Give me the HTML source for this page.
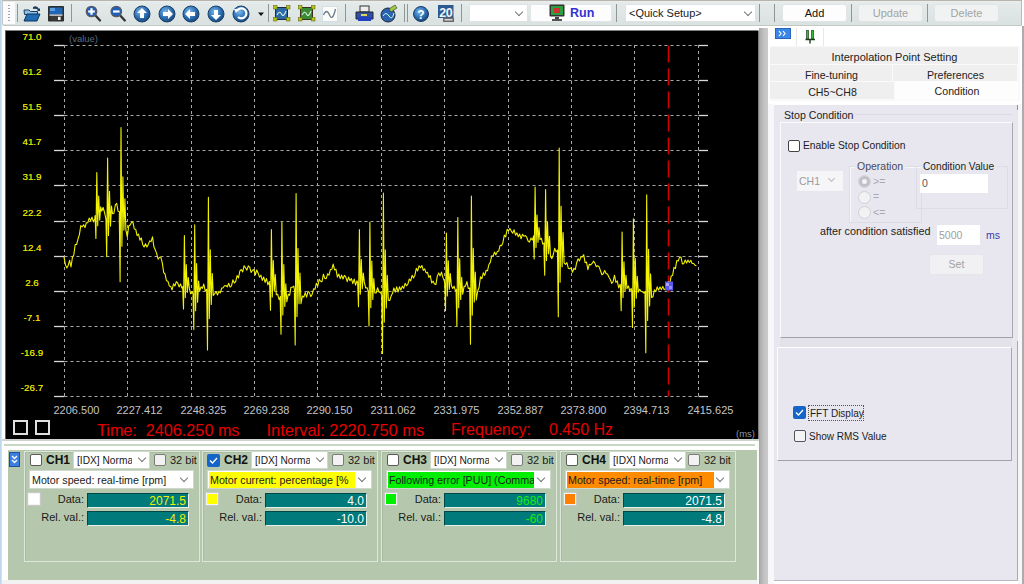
<!DOCTYPE html><html><head><meta charset="utf-8"><style>
*{margin:0;padding:0;box-sizing:border-box}
html,body{width:1024px;height:584px;overflow:hidden;background:#fff;font-family:"Liberation Sans",sans-serif;position:relative}
.a{position:absolute}
.sep{position:absolute;top:4px;width:1px;height:18px;background:#8f9696}
.cmb{position:absolute;background:#fff;border:1px solid #dfe3e3}
.chev{position:absolute;width:6px;height:6px;border-right:1.2px solid #777;border-bottom:1.2px solid #777;transform:rotate(45deg)}
.cb{position:absolute;width:12px;height:12px;border:1px solid #555;border-radius:2px;background:#fff}
.cbk{position:absolute;width:13px;height:13px;border-radius:2px;background:#1565c8}
.teal{position:absolute;background:#007a7a;border-top:1px solid #004848;border-left:1px solid #004848;border-bottom:1px solid #e8f0e8;border-right:1px solid #e8f0e8;font-size:12px;text-align:right;line-height:14px;padding-right:2px}
.gbox{position:absolute;border:1px solid #dde6da;box-shadow:inset 1px 1px 0 #a9bca3}
</style></head><body>
<div class="a" style="left:0;top:0;width:2px;height:584px;background:linear-gradient(90deg,#bcd6ee 50%,#e4eef8)"></div>
<div class="a" style="left:2px;top:0;width:1020px;height:26px;background:linear-gradient(#e9eeee 0,#e4eaea 10%,#dbe2e2 90%);border-top:1px solid #b9b4ae;border-bottom:1px solid #c2c8c2;border-right:1px solid #b8bcbc;border-left:1px solid #c4c8c8;border-bottom-left-radius:2px"></div>
<div class="a" style="left:3px;top:2px;width:12px;height:22px;background:#fbfbfb"></div>
<div class="a" style="left:8px;top:5px;width:2px;height:18px;background:repeating-linear-gradient(#9aa 0 1px,transparent 1px 3px)"></div>
<div class="sep" style="left:17px"></div>
<div class="sep" style="left:71px"></div>
<div class="sep" style="left:268px"></div>
<div class="sep" style="left:345px"></div>
<div class="sep" style="left:404px"></div>
<div class="sep" style="left:407px"></div>
<div class="sep" style="left:461px"></div>
<div class="sep" style="left:616px"></div>
<div class="sep" style="left:759px"></div>
<div class="sep" style="left:774px"></div>
<div class="sep" style="left:851px"></div>
<div class="sep" style="left:927px"></div>
<svg class="a" style="left:0;top:0" width="470" height="26"><path d="M24,10 h5 l1.5,1.5 h7 v3 h-13z" fill="#8fc0e6" stroke="#1a3c64" stroke-width="1"/><path d="M24,21 l3,-7 h13 l-3,7z" fill="#1e6cb4" stroke="#12325a" stroke-width="1"/><path d="M33,7 q4,-2 6,2 l1,-1 v3 h-3 l1,-1 q-2,-2 -5,-1z" fill="#1a3c64"/><rect x="48" y="6" width="16" height="15.5" fill="#2e2e2e" rx="1"/><rect x="49.5" y="7.5" width="13" height="7" fill="#1f66b8"/><rect x="50" y="8" width="5" height="3" fill="#5aa0e0"/><rect x="49.5" y="14.5" width="13" height="1.2" fill="#f0f0f0"/><rect x="50.5" y="16" width="11" height="4.5" fill="#3c3a36"/><rect x="58" y="16.8" width="2.6" height="3.2" fill="#f4f4f4"/><line x1="95.0" y1="15" x2="100.0" y2="20.5" stroke="#333" stroke-width="2.3" stroke-linecap="round"/><circle cx="91.5" cy="11.5" r="5.2" fill="#1f5fb8" stroke="#5a5a66" stroke-width="1.3"/><rect x="88.2" y="10.4" width="6.6" height="2.2" fill="#fff"/><rect x="90.4" y="8.2" width="2.2" height="6.6" fill="#fff"/><line x1="119.8" y1="15" x2="124.8" y2="20.5" stroke="#333" stroke-width="2.3" stroke-linecap="round"/><circle cx="116.3" cy="11.5" r="5.2" fill="#1f5fb8" stroke="#5a5a66" stroke-width="1.3"/><rect x="113.0" y="10.4" width="6.6" height="2.2" fill="#fff"/><defs><radialGradient id="bl" cx="0.4" cy="0.35" r="0.7"><stop offset="0" stop-color="#7ab8ec"/><stop offset="0.6" stop-color="#2a6db0"/><stop offset="1" stop-color="#173f70"/></radialGradient></defs><circle cx="142" cy="14" r="8" fill="url(#bl)" stroke="#1c3f66" stroke-width="1"/><path d="M142,8 l5,5 h-3 v5 h-4 v-5 h-3z" fill="#fff"/><circle cx="167" cy="14" r="8" fill="url(#bl)" stroke="#1c3f66" stroke-width="1"/><path d="M173,14 l-5,5 v-3 h-5 v-4 h5 v-3z" fill="#fff"/><circle cx="191" cy="14" r="8" fill="url(#bl)" stroke="#1c3f66" stroke-width="1"/><path d="M185,14 l5,-5 v3 h5 v4 h-5 v3z" fill="#fff"/><circle cx="216" cy="14" r="8" fill="url(#bl)" stroke="#1c3f66" stroke-width="1"/><path d="M216,20 l5,-5 h-3 v-5 h-4 v5 h-3z" fill="#fff"/><circle cx="241" cy="14" r="8" fill="url(#bl)" stroke="#1c3f66" stroke-width="1"/><path d="M237,11 a5,5 0 1 1 1,6" fill="none" stroke="#fff" stroke-width="2.2"/><path d="M234,9 l5,0 l-3,4z" fill="#fff"/><path d="M258,12.5 h6 l-3,3.5z" fill="#111"/><rect x="275.5" y="7.5" width="12" height="12" fill="#2c6aa6" stroke="#1c2c40" stroke-width="1"/><path d="M277,15 q2.5,-5 4.5,-1 t4.5,-3" fill="none" stroke="#d8f0e8" stroke-width="1.1"/><rect x="273.5" y="5.5" width="3.5" height="3.5" fill="#b4c418" stroke="#6a7010" stroke-width="0.6"/><rect x="286.5" y="5.5" width="3.5" height="3.5" fill="#b4c418" stroke="#6a7010" stroke-width="0.6"/><rect x="273.5" y="17.5" width="3.5" height="3.5" fill="#b4c418" stroke="#6a7010" stroke-width="0.6"/><rect x="286.5" y="17.5" width="3.5" height="3.5" fill="#b4c418" stroke="#6a7010" stroke-width="0.6"/><rect x="300.5" y="7.5" width="12" height="12" fill="#3a8c34" stroke="#3a3018" stroke-width="1"/><path d="M302,15 q2.5,-5 4.5,-1 t4.5,-3" fill="none" stroke="#d8f0e8" stroke-width="1.1"/><rect x="298.5" y="5.5" width="3.5" height="3.5" fill="#b4c418" stroke="#6a7010" stroke-width="0.6"/><rect x="311.5" y="5.5" width="3.5" height="3.5" fill="#b4c418" stroke="#6a7010" stroke-width="0.6"/><rect x="298.5" y="17.5" width="3.5" height="3.5" fill="#b4c418" stroke="#6a7010" stroke-width="0.6"/><rect x="311.5" y="17.5" width="3.5" height="3.5" fill="#b4c418" stroke="#6a7010" stroke-width="0.6"/><rect x="322.5" y="6.5" width="15" height="15" fill="#fcfcf8" stroke="#b8cce0" stroke-dasharray="1 1"/><path d="M323.5,15 q3,-7 6,0 t6,-6" fill="none" stroke="#6a7a90" stroke-width="1.3"/><rect x="360" y="6" width="9" height="6" fill="#eee" stroke="#333"/><path d="M356,12 h17 v7 h-17z" fill="#3050a0" stroke="#222"/><rect x="358" y="17" width="13" height="4" fill="#2040c0"/><rect x="361" y="14" width="6" height="2" fill="#e0d060"/><circle cx="388" cy="15" r="7" fill="#2a64b0" stroke="#223" stroke-width="1"/><path d="M383,16 q3,-5 6,0 t5,-3" fill="none" stroke="#bfe" stroke-width="1"/><path d="M389,9 l6,-4 l2,3 l-6,4z" fill="#9ccc40" stroke="#333" stroke-width="0.6"/><circle cx="421" cy="14" r="7.5" fill="url(#bl)" stroke="#1c3f66"/><text x="421" y="18.5" font-family="Liberation Sans" font-weight="700" font-size="12" fill="#fff" text-anchor="middle">?</text><rect x="438" y="5" width="15.5" height="13" fill="#2a5a90"/><text x="445.8" y="16.5" font-family="Liberation Sans" font-weight="700" font-size="12.5" fill="#f0f4fa" text-anchor="middle" letter-spacing="-0.5">20</text><rect x="443" y="17.5" width="11" height="4.5" fill="#6a6a6a"/><rect x="444.5" y="19" width="8" height="1.5" fill="#d8d8d8"/></svg>
<div class="cmb" style="left:469px;top:4px;width:59px;height:18px"></div><div class="chev" style="left:516px;top:9px"></div>
<div class="a" style="left:530px;top:4px;width:82px;height:18px;background:#fdfdfd;border:1px solid #e2e6e6;border-radius:2px"></div>
<svg class="a" style="left:548px;top:4px" width="18" height="18"><rect x="1.5" y="0.5" width="15" height="12" fill="#333" rx="1"/><rect x="3" y="2" width="12" height="9" fill="#2aa040"/><rect x="6" y="4" width="6" height="5" fill="#d03030"/><rect x="7" y="13" width="4" height="2" fill="#444"/><rect x="4" y="15" width="10" height="2" fill="#555"/></svg>
<div class="a" style="left:570px;top:7px;font-size:12.5px;color:#3232d2;font-weight:700;white-space:pre;line-height:1;">Run</div>
<div class="cmb" style="left:625px;top:4px;width:131px;height:18px"></div><div class="chev" style="left:745px;top:9px"></div>
<div class="a" style="left:629px;top:8px;font-size:11px;color:#1a1a1a;font-weight:400;white-space:pre;line-height:1;">&lt;Quick Setup&gt;</div>
<div class="a" style="left:782px;top:4px;width:65px;height:18px;background:#fdfdfd;border:1px solid #e0e4e4;border-radius:3px;font-size:11px;color:#111;text-align:center;line-height:17px">Add</div>
<div class="a" style="left:858px;top:4px;width:65px;height:18px;background:#f1f3f3;border:1px solid #e0e4e4;border-radius:3px;font-size:11px;color:#a3a3a3;text-align:center;line-height:17px">Update</div>
<div class="a" style="left:934px;top:4px;width:65px;height:18px;background:#f1f3f3;border:1px solid #e0e4e4;border-radius:3px;font-size:11px;color:#a3a3a3;text-align:center;line-height:17px">Delete</div>
<svg class="a" style="left:0;top:0" width="760" height="440"><rect x="5" y="30.5" width="753.5" height="408.5" fill="#000"/><rect x="5" y="30.5" width="1" height="408.5" fill="#606060"/><line x1="64.5" y1="45.5" x2="698.5" y2="45.5" stroke="#a8a8a8" stroke-width="1" stroke-dasharray="3 3"/><line x1="54" y1="45.5" x2="64.5" y2="45.5" stroke="#d8d8d8" stroke-width="1.3"/><line x1="698.5" y1="45.5" x2="708" y2="45.5" stroke="#d8d8d8" stroke-width="1.3"/><line x1="64.5" y1="80.5" x2="698.5" y2="80.5" stroke="#a8a8a8" stroke-width="1" stroke-dasharray="3 3"/><line x1="54" y1="80.5" x2="64.5" y2="80.5" stroke="#d8d8d8" stroke-width="1.3"/><line x1="698.5" y1="80.5" x2="708" y2="80.5" stroke="#d8d8d8" stroke-width="1.3"/><line x1="64.5" y1="115.5" x2="698.5" y2="115.5" stroke="#a8a8a8" stroke-width="1" stroke-dasharray="3 3"/><line x1="54" y1="115.5" x2="64.5" y2="115.5" stroke="#d8d8d8" stroke-width="1.3"/><line x1="698.5" y1="115.5" x2="708" y2="115.5" stroke="#d8d8d8" stroke-width="1.3"/><line x1="64.5" y1="150.5" x2="698.5" y2="150.5" stroke="#a8a8a8" stroke-width="1" stroke-dasharray="3 3"/><line x1="54" y1="150.5" x2="64.5" y2="150.5" stroke="#d8d8d8" stroke-width="1.3"/><line x1="698.5" y1="150.5" x2="708" y2="150.5" stroke="#d8d8d8" stroke-width="1.3"/><line x1="64.5" y1="185.5" x2="698.5" y2="185.5" stroke="#a8a8a8" stroke-width="1" stroke-dasharray="3 3"/><line x1="54" y1="185.5" x2="64.5" y2="185.5" stroke="#d8d8d8" stroke-width="1.3"/><line x1="698.5" y1="185.5" x2="708" y2="185.5" stroke="#d8d8d8" stroke-width="1.3"/><line x1="64.5" y1="221.5" x2="698.5" y2="221.5" stroke="#a8a8a8" stroke-width="1" stroke-dasharray="3 3"/><line x1="54" y1="221.5" x2="64.5" y2="221.5" stroke="#d8d8d8" stroke-width="1.3"/><line x1="698.5" y1="221.5" x2="708" y2="221.5" stroke="#d8d8d8" stroke-width="1.3"/><line x1="64.5" y1="256.5" x2="698.5" y2="256.5" stroke="#a8a8a8" stroke-width="1" stroke-dasharray="3 3"/><line x1="54" y1="256.5" x2="64.5" y2="256.5" stroke="#d8d8d8" stroke-width="1.3"/><line x1="698.5" y1="256.5" x2="708" y2="256.5" stroke="#d8d8d8" stroke-width="1.3"/><line x1="64.5" y1="291.5" x2="698.5" y2="291.5" stroke="#a8a8a8" stroke-width="1" stroke-dasharray="3 3"/><line x1="54" y1="291.5" x2="64.5" y2="291.5" stroke="#d8d8d8" stroke-width="1.3"/><line x1="698.5" y1="291.5" x2="708" y2="291.5" stroke="#d8d8d8" stroke-width="1.3"/><line x1="64.5" y1="326.5" x2="698.5" y2="326.5" stroke="#a8a8a8" stroke-width="1" stroke-dasharray="3 3"/><line x1="54" y1="326.5" x2="64.5" y2="326.5" stroke="#d8d8d8" stroke-width="1.3"/><line x1="698.5" y1="326.5" x2="708" y2="326.5" stroke="#d8d8d8" stroke-width="1.3"/><line x1="64.5" y1="361.5" x2="698.5" y2="361.5" stroke="#a8a8a8" stroke-width="1" stroke-dasharray="3 3"/><line x1="54" y1="361.5" x2="64.5" y2="361.5" stroke="#d8d8d8" stroke-width="1.3"/><line x1="698.5" y1="361.5" x2="708" y2="361.5" stroke="#d8d8d8" stroke-width="1.3"/><line x1="64.5" y1="396.5" x2="698.5" y2="396.5" stroke="#a8a8a8" stroke-width="1" stroke-dasharray="3 3"/><line x1="54" y1="396.5" x2="64.5" y2="396.5" stroke="#d8d8d8" stroke-width="1.3"/><line x1="698.5" y1="396.5" x2="708" y2="396.5" stroke="#d8d8d8" stroke-width="1.3"/><line x1="64.5" y1="45" x2="64.5" y2="397" stroke="#a8a8a8" stroke-width="1" stroke-dasharray="3 3"/><line x1="127.5" y1="45" x2="127.5" y2="397" stroke="#a8a8a8" stroke-width="1" stroke-dasharray="3 3"/><line x1="191.5" y1="45" x2="191.5" y2="397" stroke="#a8a8a8" stroke-width="1" stroke-dasharray="3 3"/><line x1="254.5" y1="45" x2="254.5" y2="397" stroke="#a8a8a8" stroke-width="1" stroke-dasharray="3 3"/><line x1="317.5" y1="45" x2="317.5" y2="397" stroke="#a8a8a8" stroke-width="1" stroke-dasharray="3 3"/><line x1="381.5" y1="45" x2="381.5" y2="397" stroke="#a8a8a8" stroke-width="1" stroke-dasharray="3 3"/><line x1="444.5" y1="45" x2="444.5" y2="397" stroke="#a8a8a8" stroke-width="1" stroke-dasharray="3 3"/><line x1="508.5" y1="45" x2="508.5" y2="397" stroke="#a8a8a8" stroke-width="1" stroke-dasharray="3 3"/><line x1="571.5" y1="45" x2="571.5" y2="397" stroke="#a8a8a8" stroke-width="1" stroke-dasharray="3 3"/><line x1="634.5" y1="45" x2="634.5" y2="397" stroke="#a8a8a8" stroke-width="1" stroke-dasharray="3 3"/><line x1="698.5" y1="45" x2="698.5" y2="397" stroke="#a8a8a8" stroke-width="1" stroke-dasharray="3 3"/><line x1="668.5" y1="45.5" x2="668.5" y2="396.5" stroke="#d00000" stroke-width="1.6" stroke-dasharray="17 6"/></svg><svg class="a" style="left:0;top:0" width="760" height="440"><path d="M64.0,256.9 L65.4,264.6 L66.8,268.0 L68.2,265.5 L69.6,260.4 L71.0,267.0 L72.4,257.5 L73.8,254.9 L75.2,244.5 L76.6,244.5 L78.0,239.2 L79.4,234.6 L80.8,225.6 L82.2,226.8 L83.6,224.8 L85.0,227.6 L86.4,222.7 L87.8,222.6 L89.2,218.1 L90.6,220.7 L92.0,217.1 L93.4,221.9 L94.8,218.4 L95.1,215.5 L95.9,238.5 L96.8,172.5 L97.7,225.8 L98.7,196.1 L99.7,220.1 L100.7,206.8 L101.7,211.2 L103.1,207.4 L104.5,212.3 L105.9,218.8 L105.9,218.3 L106.7,256.6 L107.6,158.0 L108.5,235.5 L109.5,191.2 L110.5,226.1 L111.5,206.1 L112.5,213.8 L113.9,213.5 L115.3,204.8 L116.7,203.4 L118.1,211.3 L119.5,211.8 L119.3,217.0 L120.1,281.8 L121.0,127.5 L121.9,246.2 L122.9,176.7 L123.9,230.1 L124.9,198.9 L125.9,230.2 L127.3,236.9 L128.7,226.0 L130.1,225.0 L131.5,222.5 L132.9,221.9 L134.3,229.0 L135.7,229.2 L137.1,235.6 L138.5,234.0 L139.9,240.2 L141.3,237.9 L142.7,244.7 L144.1,247.0 L145.5,243.7 L146.9,247.1 L148.3,244.4 L149.7,240.9 L151.1,241.6 L152.5,236.9 L153.9,246.8 L155.3,249.9 L156.7,253.6 L158.1,259.2 L159.5,257.2 L160.9,257.3 L162.3,262.8 L163.7,272.6 L165.1,274.2 L166.5,280.8 L167.9,281.2 L169.3,285.9 L170.7,286.4 L172.1,289.9 L173.5,283.8 L174.9,286.0 L176.3,281.6 L177.7,283.0 L179.1,286.9 L180.5,283.9 L181.9,288.0 L183.3,286.5 L182.7,288.2 L183.5,309.0 L184.4,235.5 L185.3,297.6 L186.3,264.5 L187.3,292.5 L188.3,277.6 L189.3,288.4 L190.7,293.8 L192.1,291.5 L193.5,295.2 L193.0,295.4 L193.8,329.5 L194.7,224.7 L195.6,310.7 L196.6,263.6 L197.6,302.3 L198.6,281.1 L199.6,291.3 L201.0,286.8 L202.4,288.4 L203.8,284.0 L205.2,290.9 L206.6,289.3 L206.7,292.9 L207.5,350.0 L208.4,197.2 L209.3,318.6 L210.3,249.8 L211.3,304.4 L212.3,273.5 L213.3,295.5 L214.7,293.6 L216.1,291.5 L217.5,295.0 L218.9,291.3 L220.3,292.8 L221.7,288.1 L223.1,287.8 L224.5,285.7 L225.9,285.5 L227.3,286.8 L228.7,283.3 L230.1,287.1 L231.5,285.9 L232.9,279.8 L234.3,283.0 L235.7,281.6 L237.1,275.6 L238.5,278.0 L239.9,270.8 L241.3,269.5 L242.7,271.9 L244.1,265.7 L245.5,267.7 L246.9,270.1 L248.3,265.8 L249.7,267.2 L251.1,272.4 L252.5,270.3 L253.9,269.5 L255.3,275.0 L256.7,270.0 L258.1,273.0 L259.5,277.2 L260.9,275.2 L262.3,280.4 L263.7,277.0 L265.1,282.4 L266.5,278.5 L267.9,284.9 L269.3,281.4 L269.7,286.0 L270.5,310.3 L271.4,229.5 L272.3,296.9 L273.3,260.6 L274.3,290.9 L275.3,274.5 L276.3,294.6 L277.7,294.4 L279.1,299.6 L280.5,296.5 L280.2,299.3 L281.0,334.3 L281.9,222.3 L282.8,315.0 L283.8,264.6 L284.8,306.4 L285.8,283.7 L286.8,301.8 L288.2,294.3 L289.6,295.3 L291.0,287.2 L292.4,287.2 L293.8,286.1 L295.2,294.4 L294.4,293.3 L295.2,345.0 L296.1,193.6 L297.0,316.6 L298.0,248.5 L299.0,303.8 L300.0,273.1 L301.0,303.7 L302.4,296.0 L303.8,297.1 L305.2,292.6 L306.6,297.2 L308.0,291.4 L309.4,292.6 L310.8,296.6 L312.2,294.2 L313.6,288.8 L315.0,289.3 L316.4,283.2 L317.8,285.9 L319.2,279.3 L320.6,281.3 L322.0,281.6 L323.4,274.2 L324.8,278.4 L326.2,278.7 L327.6,273.9 L329.0,275.2 L330.4,269.6 L331.8,269.3 L333.2,264.1 L334.6,269.9 L336.0,269.3 L337.4,277.1 L338.8,274.1 L340.2,278.7 L341.6,275.1 L343.0,279.0 L344.4,275.4 L345.8,277.1 L347.2,281.7 L348.6,277.1 L350.0,280.8 L351.4,278.6 L352.8,283.7 L354.2,279.1 L355.6,285.2 L357.0,280.7 L358.4,285.6 L357.7,284.2 L358.5,306.7 L359.4,229.5 L360.3,294.3 L361.3,259.6 L362.3,288.7 L363.3,273.1 L364.3,282.1 L365.7,288.0 L367.1,287.7 L368.5,292.4 L368.2,292.8 L369.0,326.0 L369.9,222.3 L370.8,307.8 L371.8,261.1 L372.8,299.5 L373.8,278.5 L374.8,292.9 L376.2,293.0 L377.6,287.7 L379.0,292.2 L380.4,292.0 L381.8,295.6 L381.7,296.3 L382.5,353.5 L383.4,193.0 L384.3,322.1 L385.3,249.8 L386.3,307.9 L387.3,275.4 L388.3,300.2 L389.7,300.5 L391.1,296.1 L392.5,293.3 L393.9,288.0 L395.3,292.1 L396.7,286.8 L398.1,292.0 L399.5,286.8 L400.9,290.1 L402.3,286.1 L403.7,288.3 L405.1,283.3 L406.5,285.8 L407.9,284.0 L409.3,279.0 L410.7,280.8 L412.1,275.3 L413.5,278.0 L414.9,275.2 L416.3,268.3 L417.7,270.9 L419.1,265.7 L420.5,267.8 L421.9,265.5 L423.3,270.4 L424.7,268.9 L426.1,272.9 L427.5,272.3 L428.9,277.4 L430.3,275.6 L431.7,283.0 L433.1,281.2 L434.5,284.0 L435.9,284.6 L437.3,276.1 L438.7,272.9 L440.1,275.9 L441.5,272.1 L442.9,277.4 L444.3,280.9 L444.7,283.7 L445.5,310.7 L446.4,233.0 L447.3,295.9 L448.3,260.9 L449.3,289.2 L450.3,273.5 L451.3,285.2 L452.7,288.5 L454.1,286.2 L455.5,291.0 L456.9,289.1 L456.1,292.5 L456.9,326.3 L457.8,217.5 L458.7,307.7 L459.7,258.8 L460.7,299.4 L461.7,277.3 L462.7,294.2 L464.1,286.4 L465.5,286.2 L466.9,281.6 L468.3,288.5 L469.7,288.0 L469.7,291.2 L470.5,344.3 L471.4,196.0 L472.3,315.1 L473.3,248.4 L474.3,302.0 L475.3,272.0 L476.3,300.0 L477.7,291.0 L479.1,287.3 L480.5,276.8 L481.9,278.6 L483.3,272.8 L484.7,275.4 L486.1,270.4 L487.5,270.8 L488.9,264.5 L490.3,262.4 L491.7,255.8 L493.1,256.2 L494.5,252.1 L495.9,254.9 L497.3,251.6 L498.7,251.1 L500.1,245.3 L501.5,245.8 L502.9,242.7 L504.3,235.1 L505.7,236.8 L507.1,229.3 L508.5,230.8 L509.9,228.6 L511.3,231.1 L512.7,233.2 L514.1,229.8 L515.5,235.2 L516.9,232.9 L518.3,236.7 L519.7,234.1 L521.1,238.8 L522.5,234.2 L523.9,236.2 L525.3,235.6 L526.7,237.2 L528.1,241.0 L529.5,242.1 L530.9,238.1 L532.3,240.0 L533.7,235.8 L533.4,237.9 L534.2,259.0 L535.1,187.0 L536.0,247.4 L537.0,215.0 L538.0,242.2 L539.0,227.6 L540.0,239.5 L541.4,238.3 L542.8,244.1 L544.2,243.0 L543.9,248.2 L544.7,275.3 L545.6,189.5 L546.5,260.4 L547.5,221.8 L548.5,253.7 L549.5,236.3 L550.5,256.4 L551.9,258.6 L553.3,254.5 L554.7,248.3 L556.1,251.9 L557.5,250.0 L557.5,254.1 L558.3,316.7 L559.2,148.0 L560.1,282.3 L561.1,206.4 L562.1,266.8 L563.1,232.6 L564.1,262.8 L565.5,264.4 L566.9,262.7 L568.3,268.2 L569.7,268.8 L571.1,267.6 L572.5,272.3 L573.9,268.3 L575.3,269.5 L576.7,262.7 L578.1,258.8 L579.5,260.9 L580.9,256.9 L582.3,256.9 L583.7,254.7 L585.1,262.7 L586.5,262.1 L587.9,269.6 L589.3,264.2 L590.7,264.9 L592.1,263.4 L593.5,261.2 L594.9,263.1 L596.3,266.8 L597.7,265.7 L599.1,266.9 L600.5,270.8 L601.9,274.8 L603.3,273.7 L604.7,270.5 L606.1,273.6 L607.5,274.0 L608.9,277.3 L610.3,279.5 L611.7,283.4 L613.1,281.6 L614.5,275.2 L615.9,282.5 L617.3,280.8 L618.7,287.9 L620.1,284.2 L620.4,286.4 L621.2,310.7 L622.1,232.0 L623.0,297.4 L624.0,261.9 L625.0,291.4 L626.0,275.4 L627.0,288.6 L628.4,285.9 L629.8,291.0 L631.2,288.4 L631.7,290.8 L632.5,327.5 L633.4,218.7 L634.3,307.3 L635.3,258.4 L636.3,298.2 L637.3,276.2 L638.3,292.1 L639.7,289.3 L641.1,291.3 L642.5,291.8 L643.9,293.0 L645.3,291.5 L645.0,294.0 L645.8,352.7 L646.7,194.8 L647.6,320.4 L648.6,249.3 L649.6,305.9 L650.6,273.9 L651.6,297.4 L653.0,296.8 L654.4,289.8 L655.8,291.6 L657.2,286.9 L658.6,290.1 L660.0,286.9 L661.4,289.6 L662.8,286.4 L664.2,289.6 L665.6,288.6 L667.0,287.2 L668.4,281.5 L669.8,283.5 L671.2,275.9 L672.6,275.4 L674.0,267.4 L675.4,268.6 L676.8,260.6 L678.2,261.1 L679.6,257.1 L681.0,257.1 L682.4,264.0 L683.8,263.6 L685.2,260.0 L686.6,263.1 L688.0,260.0 L689.4,262.5 L690.8,260.3 L692.2,263.4 L693.6,263.5 L695.0,265.2 L696.4,265.8" fill="none" stroke="#f2f200" stroke-width="1.1" stroke-linejoin="round"/><rect x="665" y="281.5" width="8" height="9" fill="#5a5af0"/><rect x="666" y="283" width="3" height="3" fill="#b0a0ff"/><rect x="669" y="286" width="3" height="3" fill="#9c8cff"/></svg>
<div class="a" style="left:12px;width:40px;top:32.0px;font-size:9.8px;font-weight:400;color:#dcdc00;text-align:center;line-height:10px;text-shadow:0 0 0.4px #dcdc00">71.0</div>
<div class="a" style="left:12px;width:40px;top:67.1px;font-size:9.8px;font-weight:400;color:#dcdc00;text-align:center;line-height:10px;text-shadow:0 0 0.4px #dcdc00">61.2</div>
<div class="a" style="left:12px;width:40px;top:102.2px;font-size:9.8px;font-weight:400;color:#dcdc00;text-align:center;line-height:10px;text-shadow:0 0 0.4px #dcdc00">51.5</div>
<div class="a" style="left:12px;width:40px;top:137.3px;font-size:9.8px;font-weight:400;color:#dcdc00;text-align:center;line-height:10px;text-shadow:0 0 0.4px #dcdc00">41.7</div>
<div class="a" style="left:12px;width:40px;top:172.4px;font-size:9.8px;font-weight:400;color:#dcdc00;text-align:center;line-height:10px;text-shadow:0 0 0.4px #dcdc00">31.9</div>
<div class="a" style="left:12px;width:40px;top:207.5px;font-size:9.8px;font-weight:400;color:#dcdc00;text-align:center;line-height:10px;text-shadow:0 0 0.4px #dcdc00">22.2</div>
<div class="a" style="left:12px;width:40px;top:242.6px;font-size:9.8px;font-weight:400;color:#dcdc00;text-align:center;line-height:10px;text-shadow:0 0 0.4px #dcdc00">12.4</div>
<div class="a" style="left:12px;width:40px;top:277.7px;font-size:9.8px;font-weight:400;color:#dcdc00;text-align:center;line-height:10px;text-shadow:0 0 0.4px #dcdc00">2.6</div>
<div class="a" style="left:12px;width:40px;top:312.8px;font-size:9.8px;font-weight:400;color:#dcdc00;text-align:center;line-height:10px;text-shadow:0 0 0.4px #dcdc00">-7.1</div>
<div class="a" style="left:12px;width:40px;top:347.9px;font-size:9.8px;font-weight:400;color:#dcdc00;text-align:center;line-height:10px;text-shadow:0 0 0.4px #dcdc00">-16.9</div>
<div class="a" style="left:12px;width:40px;top:383.0px;font-size:9.8px;font-weight:400;color:#dcdc00;text-align:center;line-height:10px;text-shadow:0 0 0.4px #dcdc00">-26.7</div>
<div class="a" style="left:69px;top:34px;font-size:9.5px;color:#5a6a80;font-weight:400;white-space:pre;line-height:1;">(value)</div>
<div class="a" style="left:53.5px;top:405px;font-size:11px;color:#c4c4c4;font-weight:400;white-space:pre;line-height:1;">2206.500</div>
<div class="a" style="left:116.5px;top:405px;font-size:11px;color:#c4c4c4;font-weight:400;white-space:pre;line-height:1;">2227.412</div>
<div class="a" style="left:180.5px;top:405px;font-size:11px;color:#c4c4c4;font-weight:400;white-space:pre;line-height:1;">2248.325</div>
<div class="a" style="left:243.5px;top:405px;font-size:11px;color:#c4c4c4;font-weight:400;white-space:pre;line-height:1;">2269.238</div>
<div class="a" style="left:306.5px;top:405px;font-size:11px;color:#c4c4c4;font-weight:400;white-space:pre;line-height:1;">2290.150</div>
<div class="a" style="left:370.5px;top:405px;font-size:11px;color:#c4c4c4;font-weight:400;white-space:pre;line-height:1;">2311.062</div>
<div class="a" style="left:433.5px;top:405px;font-size:11px;color:#c4c4c4;font-weight:400;white-space:pre;line-height:1;">2331.975</div>
<div class="a" style="left:497.5px;top:405px;font-size:11px;color:#c4c4c4;font-weight:400;white-space:pre;line-height:1;">2352.887</div>
<div class="a" style="left:560.5px;top:405px;font-size:11px;color:#c4c4c4;font-weight:400;white-space:pre;line-height:1;">2373.800</div>
<div class="a" style="left:623.5px;top:405px;font-size:11px;color:#c4c4c4;font-weight:400;white-space:pre;line-height:1;">2394.713</div>
<div class="a" style="left:687.5px;top:405px;font-size:11px;color:#c4c4c4;font-weight:400;white-space:pre;line-height:1;">2415.625</div>
<div class="a" style="left:13px;top:420px;width:15px;height:15px;border:2px solid #e0e0e0"></div>
<div class="a" style="left:35px;top:420px;width:15px;height:15px;border:2px solid #e0e0e0"></div>
<div class="a" style="left:97px;top:422px;font-size:16.2px;color:#e40000;font-weight:400;white-space:pre;line-height:1;">Time:  2406.250 ms</div>
<div class="a" style="left:266.5px;top:422px;font-size:16.4px;color:#e40000;font-weight:400;white-space:pre;line-height:1;">Interval: 2220.750 ms</div>
<div class="a" style="left:451px;top:422px;font-size:16px;color:#e40000;font-weight:400;white-space:pre;line-height:1;">Frequency:</div>
<div class="a" style="left:549px;top:422px;font-size:16px;color:#e40000;font-weight:400;white-space:pre;line-height:1;">0.450 Hz</div>
<div class="a" style="left:736px;top:429px;font-size:9.5px;color:#8a96a8;font-weight:400;white-space:pre;line-height:1;">(ms)</div>
<div class="a" style="left:2px;top:439px;width:757px;height:2px;background:#cfd3cf"></div>
<div class="a" style="left:4px;top:444px;width:751px;height:2px;background:#c9d8c2"></div>
<div class="a" style="left:2px;top:580px;width:757px;height:4px;background:#f2f2f2"></div>
<div class="a" style="left:8px;top:450px;width:749px;height:130px;background:#b5c8ad"></div>
<div class="a" style="left:9px;top:452px;width:11px;height:15px;background:#3b7de0;border:1px solid #1c4fa0"></div>
<svg class="a" style="left:9px;top:452px" width="11" height="15"><path d="M3,4 l2.5,2.5 l2.5,-2.5 M3,8 l2.5,2.5 l2.5,-2.5" fill="none" stroke="#fff" stroke-width="1.3"/></svg>
<div class="gbox" style="left:24px;top:451px;width:176px;height:111px"></div>
<div class="cb" style="left:30px;top:454px;width:12px;height:12px;border-color:#5a5a5a"></div>
<div class="a" style="left:46px;top:454px;font-size:12px;color:#111;font-weight:700;white-space:pre;line-height:1;">CH1</div>
<div class="cmb" style="left:73px;top:451px;width:77px;height:18px;border-color:#cfd8cc"></div><div class="chev" style="left:139px;top:455px"></div>
<div class="a" style="left:77px;top:454px;width:55px;height:13px;overflow:hidden;font-size:10.2px;color:#1a1a1a;white-space:pre;line-height:13px">[IDX] Normal</div>
<div class="cb" style="left:154px;top:454px;border-color:#7a7a7a;background:#f2f2f2"></div>
<div class="a" style="left:170px;top:455px;font-size:11px;color:#1a1a1a;font-weight:400;white-space:pre;line-height:1;">32 bit</div>
<div class="cmb" style="left:29px;top:470px;width:165px;height:19px;border-color:#cfd8cc"></div><div class="chev" style="left:181px;top:475px"></div>
<div class="a" style="left:31px;top:472px;width:146px;height:16px;overflow:hidden;font-size:10.7px;color:#1a1a1a;white-space:pre;line-height:16px;padding-left:1px">Motor speed: real-time [rpm]</div>
<div class="a" style="left:27px;top:492px;width:14px;height:14px;background:#f4f4f4;border:1px solid #c8c8c8"></div>
<div class="a" style="left:29px;top:494px;width:10px;height:10px;background:#ffffff"></div>
<div class="a" style="left:43px;width:41px;top:493px;font-size:11px;color:#1a1a1a;text-align:right;line-height:13px">Data:</div>
<div class="a" style="left:25px;width:59px;top:511px;font-size:11px;color:#1a1a1a;text-align:right;line-height:13px">Rel. val.:</div>
<div class="teal" style="left:87px;top:493px;width:102px;height:15px;color:#f0f000">2071.5</div>
<div class="teal" style="left:87px;top:511px;width:102px;height:15px;color:#f0f000">-4.8</div>
<div class="gbox" style="left:202px;top:451px;width:176px;height:111px"></div>
<div class="cbk" style="left:207px;top:454px"></div><svg class="a" style="left:207px;top:454px" width="13" height="13"><path d="M3,6.5 l2.5,2.5 l4.5,-5" fill="none" stroke="#fff" stroke-width="1.3"/></svg>
<div class="a" style="left:224px;top:454px;font-size:12px;color:#111;font-weight:700;white-space:pre;line-height:1;">CH2</div>
<div class="cmb" style="left:251px;top:451px;width:77px;height:18px;border-color:#cfd8cc"></div><div class="chev" style="left:317px;top:455px"></div>
<div class="a" style="left:255px;top:454px;width:55px;height:13px;overflow:hidden;font-size:10.2px;color:#1a1a1a;white-space:pre;line-height:13px">[IDX] Normal</div>
<div class="cb" style="left:332px;top:454px;border-color:#7a7a7a;background:#f2f2f2"></div>
<div class="a" style="left:348px;top:455px;font-size:11px;color:#1a1a1a;font-weight:400;white-space:pre;line-height:1;">32 bit</div>
<div class="cmb" style="left:207px;top:470px;width:165px;height:19px;border-color:#cfd8cc"></div><div class="chev" style="left:359px;top:475px"></div>
<div class="a" style="left:209px;top:472px;width:146px;height:16px;background:#ffff00;overflow:hidden;font-size:10.7px;color:#1a1a1a;white-space:pre;line-height:16px;padding-left:1px">Motor current: percentage [%</div>
<div class="a" style="left:205px;top:492px;width:14px;height:14px;background:#f4f4f4;border:1px solid #c8c8c8"></div>
<div class="a" style="left:207px;top:494px;width:10px;height:10px;background:#ffff00"></div>
<div class="a" style="left:221px;width:41px;top:493px;font-size:11px;color:#1a1a1a;text-align:right;line-height:13px">Data:</div>
<div class="a" style="left:203px;width:59px;top:511px;font-size:11px;color:#1a1a1a;text-align:right;line-height:13px">Rel. val.:</div>
<div class="teal" style="left:265px;top:493px;width:102px;height:15px;color:#ffffff">4.0</div>
<div class="teal" style="left:265px;top:511px;width:102px;height:15px;color:#ffffff">-10.0</div>
<div class="gbox" style="left:381px;top:451px;width:176px;height:111px"></div>
<div class="cb" style="left:387px;top:454px;width:12px;height:12px;border-color:#5a5a5a"></div>
<div class="a" style="left:403px;top:454px;font-size:12px;color:#111;font-weight:700;white-space:pre;line-height:1;">CH3</div>
<div class="cmb" style="left:430px;top:451px;width:77px;height:18px;border-color:#cfd8cc"></div><div class="chev" style="left:496px;top:455px"></div>
<div class="a" style="left:434px;top:454px;width:55px;height:13px;overflow:hidden;font-size:10.2px;color:#1a1a1a;white-space:pre;line-height:13px">[IDX] Normal</div>
<div class="cb" style="left:511px;top:454px;border-color:#7a7a7a;background:#f2f2f2"></div>
<div class="a" style="left:527px;top:455px;font-size:11px;color:#1a1a1a;font-weight:400;white-space:pre;line-height:1;">32 bit</div>
<div class="cmb" style="left:386px;top:470px;width:165px;height:19px;border-color:#cfd8cc"></div><div class="chev" style="left:538px;top:475px"></div>
<div class="a" style="left:388px;top:472px;width:146px;height:16px;background:#00ee00;overflow:hidden;font-size:10.7px;color:#1a1a1a;white-space:pre;line-height:16px;padding-left:1px">Following error [PUU] (Commar</div>
<div class="a" style="left:384px;top:492px;width:14px;height:14px;background:#f4f4f4;border:1px solid #c8c8c8"></div>
<div class="a" style="left:386px;top:494px;width:10px;height:10px;background:#00f000"></div>
<div class="a" style="left:400px;width:41px;top:493px;font-size:11px;color:#1a1a1a;text-align:right;line-height:13px">Data:</div>
<div class="a" style="left:382px;width:59px;top:511px;font-size:11px;color:#1a1a1a;text-align:right;line-height:13px">Rel. val.:</div>
<div class="teal" style="left:444px;top:493px;width:102px;height:15px;color:#10f010">9680</div>
<div class="teal" style="left:444px;top:511px;width:102px;height:15px;color:#10f010">-60</div>
<div class="gbox" style="left:560px;top:451px;width:176px;height:111px"></div>
<div class="cb" style="left:566px;top:454px;width:12px;height:12px;border-color:#5a5a5a"></div>
<div class="a" style="left:582px;top:454px;font-size:12px;color:#111;font-weight:700;white-space:pre;line-height:1;">CH4</div>
<div class="cmb" style="left:609px;top:451px;width:77px;height:18px;border-color:#cfd8cc"></div><div class="chev" style="left:675px;top:455px"></div>
<div class="a" style="left:613px;top:454px;width:55px;height:13px;overflow:hidden;font-size:10.2px;color:#1a1a1a;white-space:pre;line-height:13px">[IDX] Normal</div>
<div class="cb" style="left:688px;top:454px;border-color:#7a7a7a;background:#f2f2f2"></div>
<div class="a" style="left:704px;top:455px;font-size:11px;color:#1a1a1a;font-weight:400;white-space:pre;line-height:1;">32 bit</div>
<div class="cmb" style="left:565px;top:470px;width:165px;height:19px;border-color:#cfd8cc"></div><div class="chev" style="left:717px;top:475px"></div>
<div class="a" style="left:567px;top:472px;width:147px;height:16px;background:#ff8c00;overflow:hidden;font-size:10.7px;color:#1a1a1a;white-space:pre;line-height:16px;padding-left:1px">Motor speed: real-time [rpm]</div>
<div class="a" style="left:563px;top:492px;width:14px;height:14px;background:#f4f4f4;border:1px solid #c8c8c8"></div>
<div class="a" style="left:565px;top:494px;width:10px;height:10px;background:#ff8000"></div>
<div class="a" style="left:579px;width:41px;top:493px;font-size:11px;color:#1a1a1a;text-align:right;line-height:13px">Data:</div>
<div class="a" style="left:561px;width:59px;top:511px;font-size:11px;color:#1a1a1a;text-align:right;line-height:13px">Rel. val.:</div>
<div class="teal" style="left:623px;top:493px;width:102px;height:15px;color:#ffffff">2071.5</div>
<div class="teal" style="left:623px;top:511px;width:102px;height:15px;color:#ffffff">-4.8</div>
<div class="a" style="left:757px;top:441px;width:2px;height:143px;background:#fafafa"></div>
<div class="a" style="left:759px;top:28px;width:9px;height:556px;background:linear-gradient(90deg,#a4a4a4,#bababa 35%,#c6c6c6 70%,#cacaca)"></div>
<div class="a" style="left:768px;top:26px;width:254px;height:558px;background:#fff"></div><div class="a" style="left:768px;top:104px;width:6px;height:480px;background:#f7f7f9"></div><div class="a" style="left:1018px;top:104px;width:4px;height:480px;background:#f6f6f4"></div>
<div class="a" style="left:1022px;top:26px;width:2px;height:558px;background:#a9adb2"></div>
<div class="a" style="left:775px;top:28px;width:16px;height:11px;background:#3c86e6;border:1px solid #2a66c0"></div>
<svg class="a" style="left:775px;top:28px" width="16" height="11"><path d="M4,3 l2,2.5 l-2,2.5 M8,3 l2,2.5 l-2,2.5" fill="none" stroke="#fff" stroke-width="1.2"/></svg>
<div class="a" style="left:796px;top:28px;width:1px;height:18px;background:#e8e8e8"></div><div class="a" style="left:823px;top:28px;width:1px;height:18px;background:#e8e8e8"></div>
<svg class="a" style="left:803px;top:28px" width="14" height="17"><path d="M4.5,2 v9 M9.5,2 v9" fill="none" stroke="#1a4a1a" stroke-width="2.6"/><path d="M4.5,2.5 v8 M9.5,2.5 v8" fill="none" stroke="#30c030" stroke-width="1"/><path d="M2.5,11.5 h9.5 M7,11 v4.5" fill="none" stroke="#1a3a1a" stroke-width="1.4"/></svg>
<div class="a" style="left:770px;top:46px;width:250px;height:55px;background:#f8f8f8"></div>
<div class="a" style="left:770px;top:47px;width:249px;height:18px;background:#efefef;border-right:1px solid #fafafa;border-bottom:1px solid #fafafa"></div><div class="a" style="left:770px;top:48px;width:249px;height:18px;font-size:10.6px;color:#222;text-align:center;line-height:18px"><span style="font-size:11px">Interpolation Point Setting</span></div>
<div class="a" style="left:770px;top:65px;width:123px;height:17px;background:#efefef;border-right:1px solid #fafafa;border-bottom:1px solid #fafafa"></div><div class="a" style="left:770px;top:66.5px;width:123px;height:17px;font-size:10.6px;color:#222;text-align:center;line-height:17px">Fine-tuning</div>
<div class="a" style="left:893px;top:65px;width:125px;height:17px;background:#efefef;border-right:1px solid #fafafa;border-bottom:1px solid #fafafa"></div><div class="a" style="left:893px;top:66.5px;width:125px;height:17px;font-size:10.6px;color:#222;text-align:center;line-height:17px">Preferences</div>
<div class="a" style="left:770px;top:82px;width:125px;height:18px;background:#efefef;border-right:1px solid #fafafa;border-bottom:1px solid #fafafa"></div><div class="a" style="left:770px;top:83px;width:125px;height:18px;font-size:10.6px;color:#222;text-align:center;line-height:18px">CH5~CH8</div>
<div class="a" style="left:895px;top:81px;width:124px;height:20px;background:#fdfdfd;border-right:1px solid #fafafa;border-bottom:1px solid #fafafa"></div><div class="a" style="left:895px;top:80.5px;width:124px;height:20px;font-size:10.6px;color:#222;text-align:center;line-height:20px">Condition</div>
<div class="a" style="left:774px;top:105px;width:244px;height:475px;background:#e8e7ef"></div>
<div class="a" style="left:855px;top:114px;width:158px;height:1px;background:#dcdce2"></div>
<div class="a" style="left:780px;top:337px;width:232px;height:10px;background:#e3e2e9"></div>
<div class="a" style="left:1017px;top:341px;width:1px;height:240px;background:#a8a8b0"></div>
<div class="a" style="left:774px;top:580px;width:244px;height:1px;background:#b8b8c0"></div>
<div class="a" style="left:1017px;top:105px;width:1px;height:5px;background:#909098"></div>
<div class="a" style="left:784px;top:110px;font-size:10.6px;color:#1c1c1c;font-weight:400;white-space:pre;line-height:1;">Stop Condition</div>
<div class="a" style="left:780px;top:122px;width:233px;height:216px;border-left:1px solid #fbfbfb;border-top:1px solid #fbfbfb;border-right:1px solid #a8a8b0;border-bottom:1px solid #a0a0a8"></div>
<div class="cb" style="left:788px;top:140px;width:12px;height:12px;border-color:#444"></div>
<div class="a" style="left:803px;top:141px;font-size:10.3px;color:#1c1c1c;font-weight:400;white-space:pre;line-height:1;">Enable Stop Condition</div>
<div class="a" style="left:797px;top:171px;width:46px;height:20px;background:#f6f6f8"></div>
<div class="a" style="left:799px;top:176px;font-size:10.5px;color:#9a9a9a;font-weight:400;white-space:pre;line-height:1;">CH1</div>
<div class="chev" style="left:829px;top:176px;border-color:#b8b8b8;width:5px;height:5px"></div>
<div class="a" style="left:849px;top:166px;width:73px;height:57px;border:1px solid #dcdce4;box-shadow:inset 1px 1px 0 #f8f8fb"></div>
<div class="a" style="left:855px;top:160px;width:50px;height:12px;background:#e8e7ee"></div>
<div class="a" style="left:857px;top:161px;font-size:10.5px;color:#4a4a5a;font-weight:400;white-space:pre;line-height:1;">Operation</div>
<div class="a" style="left:857.5px;top:175.0px;width:13px;height:13px;border-radius:50%;background:#f2f2f5;border:1px solid #d0d0d8"></div>
<div class="a" style="left:873px;top:175.5px;font-size:10.5px;color:#a8a8b0;font-weight:400;white-space:pre;line-height:1;">&gt;=</div>
<div class="a" style="left:857.5px;top:190.5px;width:13px;height:13px;border-radius:50%;background:#f2f2f5;border:1px solid #d0d0d8"></div>
<div class="a" style="left:873px;top:191px;font-size:10.5px;color:#a8a8b0;font-weight:400;white-space:pre;line-height:1;">=</div>
<div class="a" style="left:857.5px;top:206.0px;width:13px;height:13px;border-radius:50%;background:#f2f2f5;border:1px solid #d0d0d8"></div>
<div class="a" style="left:873px;top:206.5px;font-size:10.5px;color:#a8a8b0;font-weight:400;white-space:pre;line-height:1;">&lt;=</div>
<div class="a" style="left:858.5px;top:175.5px;width:11px;height:11px;border-radius:50%;border:3px solid #c0c0c6;background:#f4f4f6"></div>
<div class="a" style="left:916px;top:166px;width:92px;height:43px;border:1px solid #dcdce4"></div>
<div class="a" style="left:921px;top:160px;width:76px;height:12px;background:#e8e7ee"></div>
<div class="a" style="left:923px;top:162px;font-size:10.2px;color:#1c1c1c;font-weight:400;white-space:pre;line-height:1;">Condition Value</div>
<div class="a" style="left:920px;top:174px;width:68px;height:19px;background:#fff"></div>
<div class="a" style="left:922px;top:178px;font-size:10.5px;color:#555;font-weight:400;white-space:pre;line-height:1;">0</div>
<div class="a" style="left:820px;top:226px;font-size:10.8px;color:#1c1c1c;font-weight:400;white-space:pre;line-height:1;">after condition satisfied</div>
<div class="a" style="left:937px;top:225px;width:43px;height:20px;background:#fff"></div>
<div class="a" style="left:939px;top:230px;font-size:10.5px;color:#a0a0a0;font-weight:400;white-space:pre;line-height:1;">5000</div>
<div class="a" style="left:986px;top:230px;font-size:10.5px;color:#3a3aa8;font-weight:400;white-space:pre;line-height:1;">ms</div>
<div class="a" style="left:929px;top:254px;width:55px;height:21px;background:#f1f1f4;border:1px solid #e6e6ea;border-radius:2px;font-size:10.5px;color:#a0a0a0;text-align:center;line-height:19px">Set</div>
<div class="a" style="left:777px;top:347px;width:235px;height:114px;background:#e8e7ef;border-top:1px solid #fdfdfd;border-left:1px solid #fdfdfd;border-right:1px solid #a8a8b0;border-bottom:1px solid #a0a0a8"></div>
<div class="cbk" style="left:793px;top:406px"></div><svg class="a" style="left:793px;top:406px" width="13" height="13"><path d="M3,6.5 l2.5,2.5 l4.5,-5" fill="none" stroke="#fff" stroke-width="1.3"/></svg>
<div class="a" style="left:808px;top:405px;width:56px;height:16px;border:1px dotted #555"></div>
<div class="a" style="left:810px;top:409px;font-size:10px;color:#1c1c1c;font-weight:400;white-space:pre;line-height:1;">FFT Display</div>
<div class="cb" style="left:794px;top:430px;width:12px;height:12px;border-color:#555;background:#f4f4f6"></div>
<div class="a" style="left:809px;top:432px;font-size:10px;color:#1c1c1c;font-weight:400;white-space:pre;line-height:1;">Show RMS Value</div>
</body></html>
